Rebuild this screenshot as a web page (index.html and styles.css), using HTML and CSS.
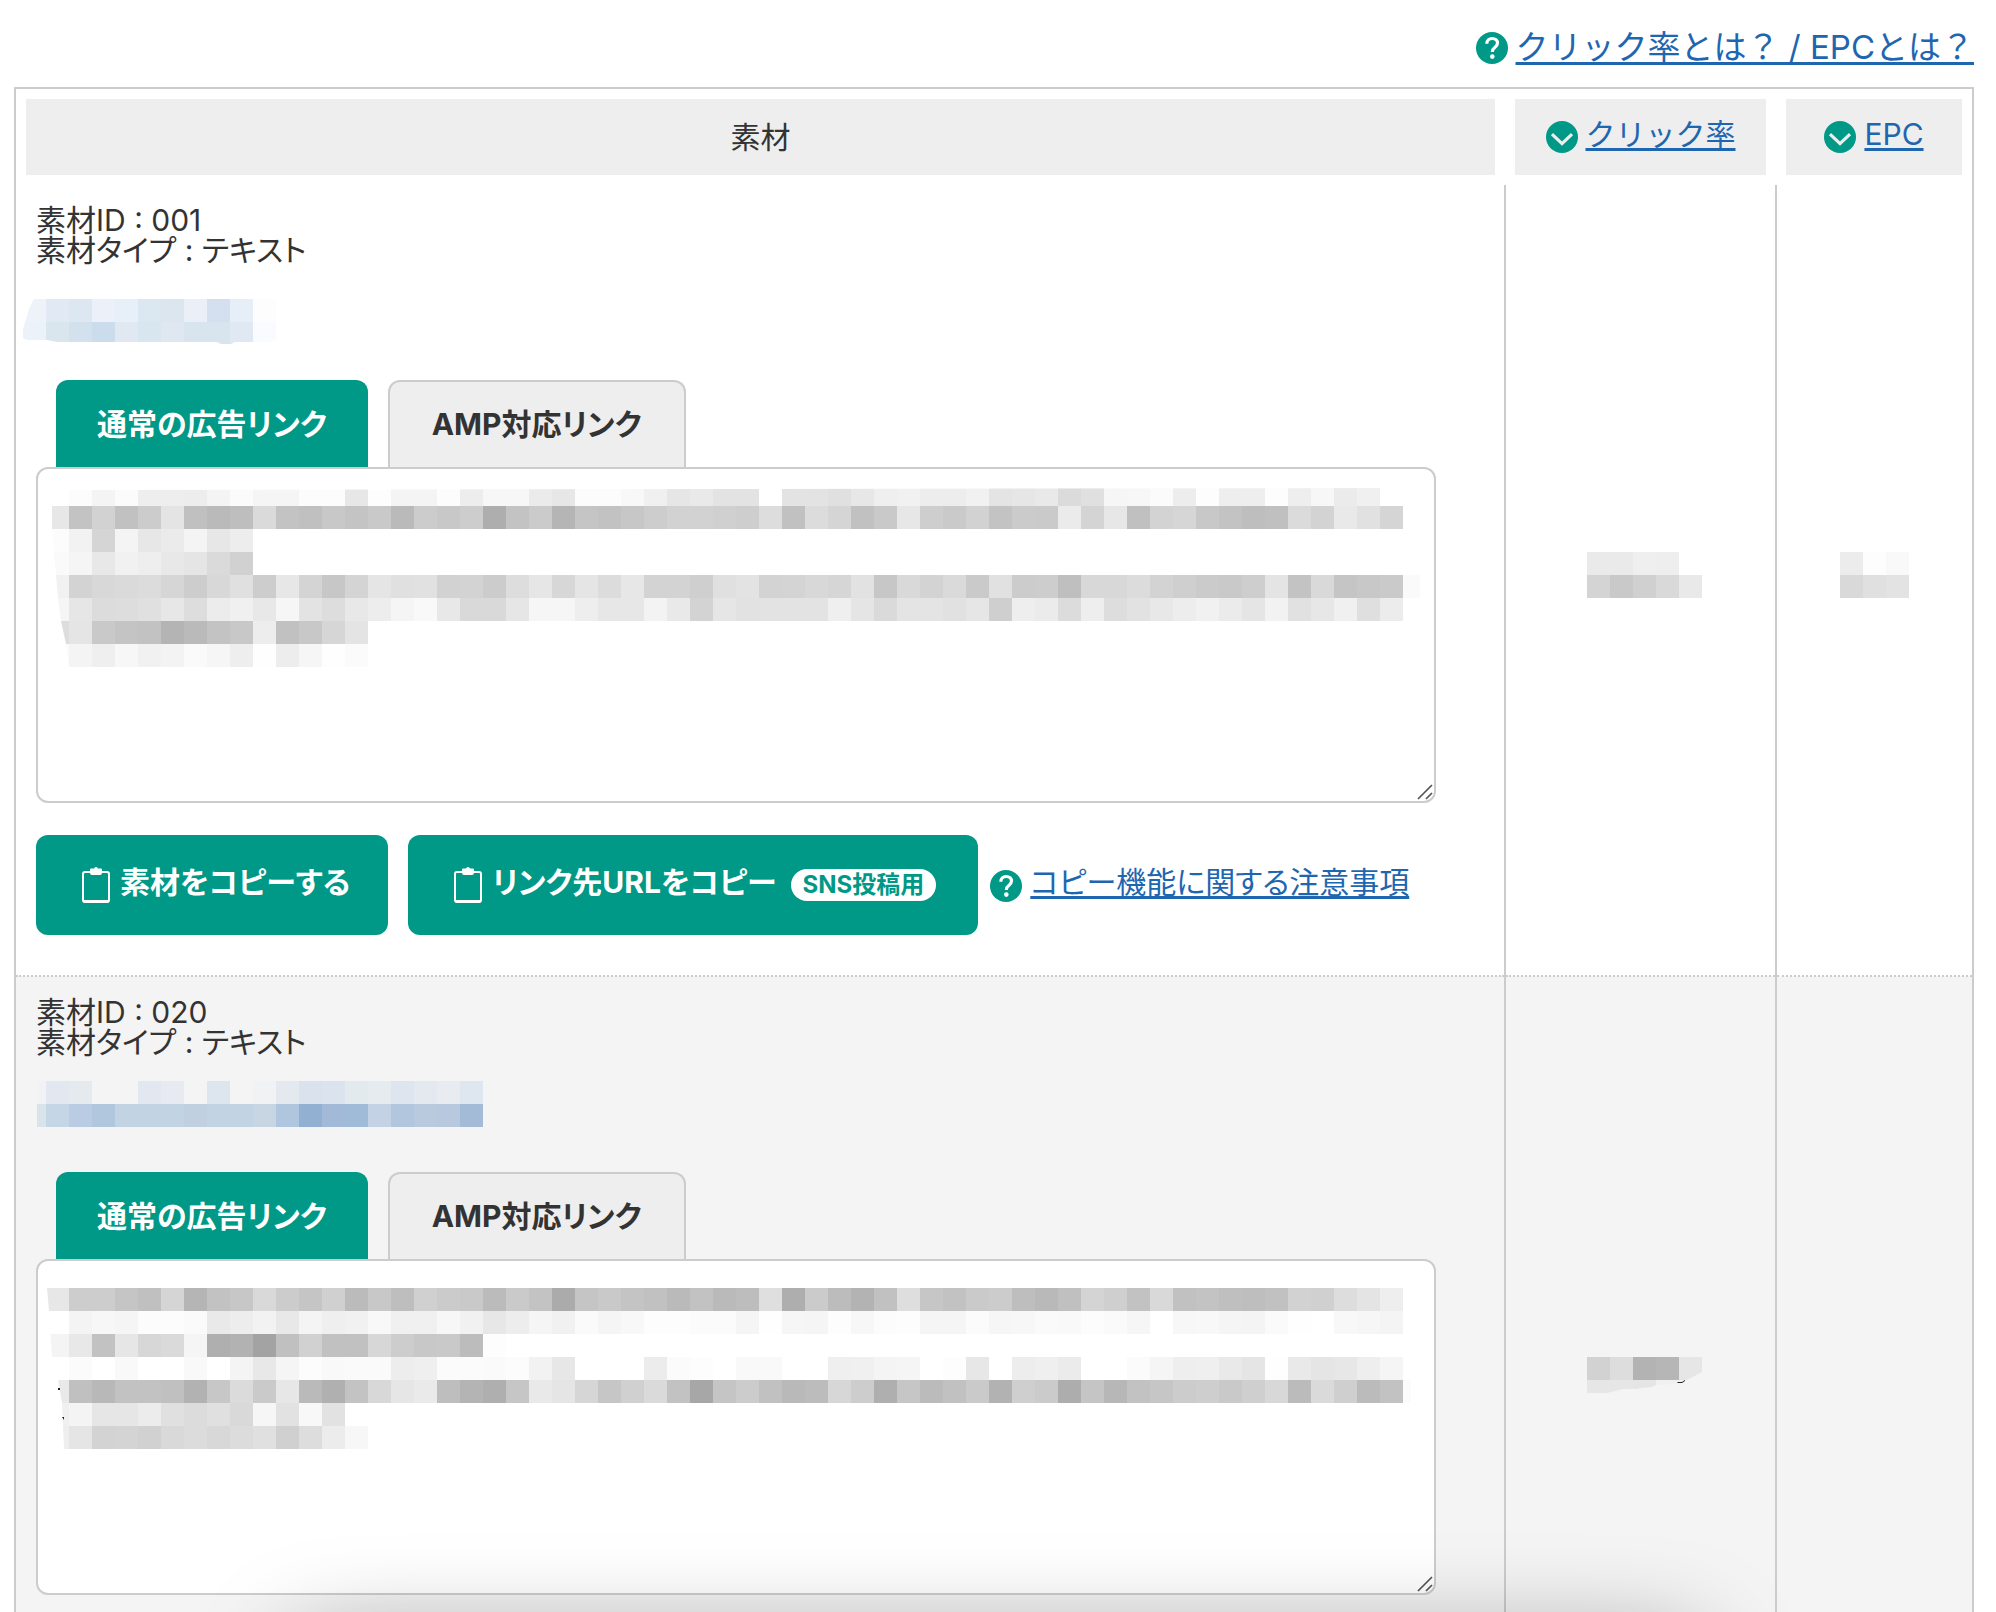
FILE: index.html
```
<!DOCTYPE html>
<html lang="ja">
<head>
<meta charset="utf-8">
<title>素材一覧</title>
<link rel="stylesheet" href="styles.css">
</head>
<body>
<svg class="sprite" aria-hidden="true">
  <symbol id="i-help" viewBox="0 0 32 32">
    <circle cx="16" cy="16" r="16" fill="#009987"/>
    <path d="M10.800 11.800c0-3.300 2.300-5.300 5.400-5.300s5.300 1.900 5.300 4.600c0 2.200-1.200 3.300-2.700 4.400-1.600 1.200-2.400 2-2.400 4v.6" fill="none" stroke="#fff" stroke-width="3.200"/>
    <circle cx="16.300" cy="24.600" r="2.300" fill="#fff"/>
  </symbol>
  <symbol id="i-down" viewBox="0 0 32 32">
    <circle cx="16" cy="16" r="16" fill="#009987"/>
    <path d="M6 13.200L16 22.600 26 13.200" fill="none" stroke="#eee" stroke-width="3.200"/>
  </symbol>
  <symbol id="i-clip" viewBox="0 0 28 36">
    <path d="M8 5H3Q1 5 1 7V33Q1 35 3 35H25Q27 35 27 33V7Q27 5 25 5H20" fill="none" stroke="#fff" stroke-width="2"/>
    <path d="M1 33H27V34Q27 36 25 36H3Q1 36 1 34Z" fill="#fff"/>
    <path d="M8 2.500Q8 1.500 9 1.500H12Q12.500 0 14 0T16 1.500H19Q20 1.500 20 2.500V6Q20 8 18 8H10Q8 8 8 6Z" fill="#fff"/>
  </symbol>
  <symbol id="i-grip" viewBox="0 0 16 16">
    <path d="M1 15L15 1M9 15L15 9" fill="none" stroke="#555" stroke-width="1.700"/>
  </symbol>
</svg>
<div class="page">
  <p class="guide"><svg class="icon"><use href="#i-help"/></svg><a href="#guide">クリック率とは？ / EPCとは？</a></p>
  <table class="materials">
    <colgroup><col><col class="col-rate"><col class="col-epc"></colgroup>
    <thead>
      <tr>
        <th scope="col"><div class="head">素材</div></th>
        <th scope="col"><div class="head"><svg class="icon"><use href="#i-down"/></svg><a href="#rate">クリック率</a></div></th>
        <th scope="col"><div class="head"><svg class="icon"><use href="#i-down"/></svg><a href="#epc">EPC</a></div></th>
      </tr>
    </thead>
    <tbody>
      <tr>
        <td class="material">
          <p class="info">素材ID : 001<br>素材タイプ : テキスト</p>
          <a class="preview" href="#m001" aria-label="広告リンク"><svg class="mosaic" data-mosaic="link001"></svg></a>
          <div class="tabs"><button class="tab active" type="button">通常の広告リンク</button><button class="tab" type="button">AMP対応リンク</button></div>
          <div class="code"><textarea aria-label="広告コード"></textarea><svg class="mosaic" data-mosaic="code001"></svg><svg class="grip"><use href="#i-grip"/></svg></div>
          <div class="actions">
            <button class="copy" type="button"><svg class="clip"><use href="#i-clip"/></svg>素材をコピーする</button>
            <button class="copy copy-url" type="button"><svg class="clip"><use href="#i-clip"/></svg>リンク先URLをコピー<span class="badge">SNS投稿用</span></button>
            <p class="note"><svg class="icon"><use href="#i-help"/></svg><a href="#note">コピー機能に関する注意事項</a></p>
          </div>
        </td>
        <td class="value value-rate"><svg class="mosaic" data-mosaic="rate001"></svg></td>
        <td class="value"><svg class="mosaic" data-mosaic="epc001"></svg></td>
      </tr>
      <tr>
        <td class="material">
          <p class="info">素材ID : 020<br>素材タイプ : テキスト</p>
          <a class="preview" href="#m020" aria-label="広告リンク"><svg class="mosaic" data-mosaic="link020"></svg></a>
          <div class="tabs"><button class="tab active" type="button">通常の広告リンク</button><button class="tab" type="button">AMP対応リンク</button></div>
          <div class="code"><textarea aria-label="広告コード"></textarea><svg class="mosaic" data-mosaic="code020"></svg><svg class="grip"><use href="#i-grip"/></svg></div>
        </td>
        <td class="value value-rate"><svg class="mosaic" data-mosaic="rate020"></svg></td>
        <td class="value"></td>
      </tr>
    </tbody>
  </table>
</div>
<div class="panel-shadow"></div>
<script src="mosaic.js"></script>
</body>
</html>
```
FILE: styles.css
```
* { box-sizing: border-box; }
body {
  margin: 0;
  background: #fff;
  color: #333;
  font: 30px/30px Inter, "Noto Sans CJK JP", sans-serif;
}
p { margin: 0; }
a {
  color: #1f66b0;
  text-decoration: underline;
  text-decoration-thickness: 3px;
  text-decoration-skip-ink: none;
  text-underline-offset: 3px;
}
.sprite { position: absolute; width: 0; height: 0; }
.page { height: 100vh; overflow: hidden; padding: 0 22px 0 14px; }
.icon { width: 32px; height: 32px; flex: none; margin-top: 2px; }
.mosaic { display: block; flex: none; }

.guide {
  display: flex;
  justify-content: flex-end;
  align-items: center;
  gap: 8px;
  height: 87px;
  padding-top: 6px;
  font-size: 33px;
}

.materials {
  width: 100%;
  table-layout: fixed;
  border-collapse: collapse;
  border: 2px solid #ccc;
}
.col-rate { width: 271px; }
.col-epc { width: 197px; }
th { padding: 10px; font-weight: normal; }
.head {
  display: flex;
  align-items: center;
  justify-content: center;
  gap: 8px;
  height: 76px;
  background: #eee;
}
.head .icon { margin-top: 0; }
.head a { margin-bottom: 6px; }
tbody tr + tr { background: #f4f4f4; border-top: 2px dotted #ccc; }
td { padding: 0; }
td + td { border-left: 2px solid #ccc; }
.material { height: 791px; padding: 20px; vertical-align: top; }
.info, .tab, .copy, .note { font-feature-settings: "palt"; }
.value { padding: 0 0 10px; }
.value-rate { padding-left: 8px; }
.value .mosaic { margin: 0 auto; }

.preview { display: flex; height: 115px; padding-top: 24px; margin-left: -13px; }

.tabs { display: flex; gap: 20px; padding-left: 20px; }
.tab {
  height: 87px;
  padding: 0 42px 6px;
  border: 2px solid #ccc;
  border-bottom: 0;
  border-radius: 12px 12px 0 0;
  background: #eee;
  color: #333;
  font-family: inherit;
  font-size: 30px;
  font-weight: bold;
}
.tab.active { padding: 0 39px 6px; border-color: #009987; background: #009987; color: #fff; }

.code { position: relative; width: calc(100% - 48px); height: 336px; }
.code textarea {
  display: block;
  width: 100%;
  height: 100%;
  padding: 16px;
  border: 2px solid #ccc;
  border-radius: 12px;
  background: #fff;
  font: inherit;
}
.code textarea::-webkit-resizer { display: none; }
.code .mosaic { position: absolute; left: 10px; top: 16px; pointer-events: none; }
.code .grip { position: absolute; right: 3px; bottom: 3px; width: 16px; height: 16px; pointer-events: none; }

.actions { display: flex; align-items: center; margin-top: 32px; }
.copy {
  display: flex;
  align-items: center;
  height: 100px;
  margin-right: 20px;
  padding: 0 38px 10px 46px;
  border: 0;
  border-radius: 12px;
  background: #009987;
  color: #fff;
  font-family: inherit;
  font-size: 30px;
  font-weight: bold;
}
.copy-url { margin-right: 12px; padding-right: 42px; }
.clip { width: 28px; height: 36px; margin: 10px 10px 0 0; }
.badge {
  margin: 10px 0 0 14px;
  padding: 0 12px;
  border-radius: 16px;
  background: #fff;
  color: #009987;
  font-size: 24px;
  line-height: 32px;
}
.note { display: flex; align-items: center; gap: 8px; }
.note a { margin-bottom: 6px; }

/* shade cast upwards by the panel docked under the window */
.panel-shadow {
  position: fixed;
  left: 15%;
  right: 15%;
  top: calc(100% + 33px);
  height: 300px;
  box-shadow: 0 0 100px rgba(0, 0, 0, .4);
  pointer-events: none;
}
```
FILE: mosaic.js
```
// Masked values: each token is one 23px cell (two-digit grey or six-digit colour, "-" is empty).
const CELL = 23;
const MOSAICS = {
  link001: {
    top: 10,
    clip: '11,10 6,20 0,40 0,49 4,51 24,51 34,53 194,53 198,55 208,55 212,53 246,53 253,51 253,10',
    rows: [
      'edf3f8 e1eaf4 dce7f1 ecf1f9 e7eff8 dce8f1 dbe6ef ebf0f8 d4e0ef e6eef8 fdfdfe',
      'ebf2fa dae6ee d3e0ee cbdcec e0e9f2 d8e6f0 dfe8f1 d9e5ee d9e5ee e0e9f3 fafbfe'
    ]
  },
  link020: {
    top: 0,
    clip: '16,0 460,0 460,46 14,46 14,26',
    rows: [
      'f0f2f4 e2e7f0 e5eaee - - e2e7f0 e7eaf0 - dde6ef - f0f2f4 e3e9ee dae3ed dbe4ee e3eaee e6ebf0 dde6ef e3e9ee e8ecf1 dee7f0',
      'd8e3ea c5d6e6 b9cce3 b1c7de c2d3e3 c2d3e3 c2d3e3 c0d0e1 c2d3e3 c2d3e3 c8d6e4 b0c6de 92b0d2 a2bad8 a0bbd7 c3d2e4 b2c7de b9cadf b8c9df a3bbd7'
    ]
  },
  code001: {
    top: 0,
    clip: '23,7 1374,5 1374,138 1357,138 1357,184 23,184 20,161 15,138 12,115 10,92 6,46 6,23',
    rows: [
      '- fc f4 fb ee ee ed f4 fb f5 f5 fc fc e7 fd f4 f4 fc ed f7 f7 eb e7 fc fc f8 f0 e6 e9 e3 e3 - e3 e3 e0 e7 ef f1 ed ed f1 e4 e6 e9 db e0 f6 f7 fb ed fd ee ee fd ee f7 eb f0 -',
      'e7 c3 d2 c1 cc e4 c0 ba be da c3 c0 c8 c4 c9 ba cc c8 cd ae c3 cb b5 c5 c2 c7 cd d2 d2 d0 ce dd c1 dc d5 c1 c9 e7 ce ca d2 c3 cb ca eb d4 e7 c0 d3 d6 c8 c3 be c0 db d3 e9 e1 d5',
      'fc f2 d5 f4 e7 eb f4 e7 ed',
      'fa f5 e8 f1 ee e8 e5 da d1',
      'f1 d3 d8 da dc d6 cd d8 e0 cd e7 d4 c7 d4 e5 e0 e1 d2 d3 cc dd e6 d7 e5 dc e7 d3 d3 cf e0 e3 d3 d4 d8 d6 e2 c7 d9 d3 da ca e1 cc cd bf d8 d8 dc d3 cf cb c9 ce e4 c3 d9 c5 c8 ca fa',
      'f5 e6 dc dd e0 e7 dd ec f0 e8 f6 e3 dd e8 ed f5 f9 e8 d9 d9 e6 f6 f6 ee e7 e7 f3 e9 d3 e6 e2 e3 e3 e3 ef e5 da e4 e4 e1 e6 cf ee eb dc ee dd e2 e8 ed f1 eb e5 f2 e1 e7 f0 df ec',
      'dd e5 c9 c4 c2 b4 ba c3 c8 ed c1 c8 d6 e4',
      'fa f4 ef f7 f1 f3 fa f6 ee fe ed f6 fe fb'
    ]
  },
  code020: {
    top: 13,
    clip: '1,13 1365,13 1365,174 18,174 16,128 12,105 6,82 3,36',
    rows: [
      'e7 cd cd c5 c0 d5 b5 c2 c7 d9 cc c5 d0 bb c8 be d0 cb c9 bb ca c3 ab c5 c9 c4 c1 ba c2 ba bd df ae cb bc b3 c1 de c6 c2 ca cc be b9 c0 d4 cf c2 d9 c1 c3 bf be c1 d2 d0 dd e4 ee',
      '- f4 f7 f5 fc fc fa e9 ed f2 e8 f4 ef f1 f8 f0 f0 f7 f1 e7 ed f5 f1 fa f5 f8 fd fd fb fb f5 fe f6 f5 fd f7 fc fd f5 f5 fb f6 f7 fa f9 fc fa f6 - f7 f8 f5 f4 fa fe - f8 f6 f4',
      'f4 e8 c2 e6 d7 da f5 af b2 a3 c0 d1 c1 c1 d7 cd c8 c9 bc fd',
      '- fb - f9 - - f9 - f4 e8 f5 fc f9 fa fa ed ef fb fb fa fc f2 e7 - - - ec fb fd - f9 f9 - - ef f0 f4 f5 - fd e7 - ed ef eb - - fb f5 ee ef e9 e5 fe e9 e5 e7 ee f5',
      'e9 c0 b8 c2 c2 c0 b2 c7 db ca e7 ba b0 c3 d8 e6 ea be b4 af c6 e9 e5 d6 c6 d0 da c2 a7 c5 cc c1 b9 bc d7 cd af c6 bb c1 ca b2 cf cb ad c5 b7 c2 c6 cc ce c9 cf d8 bb da cf bb c2 fb',
      'f0 f4 e6 e6 ec e0 dc e0 d9 f6 e2 f8 e2',
      'ee e5 d3 d4 d1 d9 dc d8 dc e0 d0 dd ec f7'
    ],
    marks: 'M12 113h2v2h-2z M16 142h2v3z'
  },
  rate001: { top: 0, rows: ['ea ea ef ee', 'd4 c9 d0 d9 e9'] },
  epc001: { top: 0, rows: ['ec fd f9', 'd9 e0 e3'] },
  rate020: {
    top: 16,
    height: 52,
    clip: '0,16 115,16 115,31 100,39 90,43 69,44 65,46 54,47 50,48 36,48 20,52 0,52',
    rows: ['d2 dd b3 b6 e6', 'e6 e6 e5 f0 f0'],
    marks: 'M90 41l5 0 3-2v1l-3 2h-4z'
  }
};

document.querySelectorAll('[data-mosaic]').forEach((svg) => {
  const name = svg.dataset.mosaic;
  const { top, height, clip, rows, marks } = MOSAICS[name];
  const width = Math.max(...rows.map((row) => row.split(' ').length)) * CELL;
  let cells = '';
  rows.forEach((row, r) => {
    row.split(' ').forEach((tone, c) => {
      if (tone === '-') return;
      const fill = tone.length === 2 ? tone.repeat(3) : tone;
      cells += `<rect x="${c * CELL}" y="${top + r * CELL}" width="${CELL}" height="${CELL}" fill="#${fill}"/>`;
    });
  });
  svg.setAttribute('width', width);
  svg.setAttribute('height', height || top + rows.length * CELL);
  svg.innerHTML = clip
    ? `<clipPath id="clip-${name}"><polygon points="${clip}"/></clipPath><g clip-path="url(#clip-${name})">${cells}</g>`
    : cells;
  if (marks) svg.innerHTML += `<path d="${marks}" fill="#222"/>`;
});
```
